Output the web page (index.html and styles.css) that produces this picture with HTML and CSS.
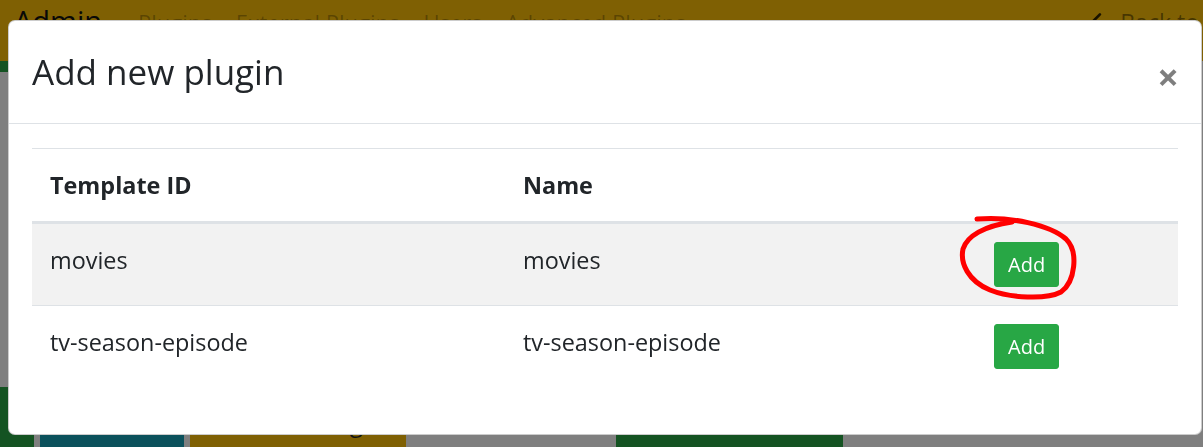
FILE: index.html
```html
<!DOCTYPE html>
<html>
<head>
<meta charset="utf-8">
<link rel="stylesheet" href="styles.css">
</head>
<body>
<div class="page">
  <nav class="navbar">
    <span class="brand">Admin</span>
    <ul class="nav-links">
      <li>Plugins</li>
      <li>External Plugins</li>
      <li>Users</li>
      <li>Advanced Plugins</li>
    </ul>
    <span class="back">
      <svg class="back-icon" viewBox="0 0 24 24" width="26" height="26"><path d="M20 12H5M11 5l-7 7 7 7" fill="none" stroke="currentColor" stroke-width="2.5" stroke-linecap="round" stroke-linejoin="round"/></svg>
      Back to
    </span>
  </nav>
  <div class="content">
    <div class="top-strip"></div>
    <div class="spacer"></div>
    <div class="btn-row">
      <div class="bg-btn green first"></div>
      <div class="bg-btn teal"></div>
      <div class="bg-btn yellow">Running</div>
      <div class="bg-btn blank"></div>
      <div class="bg-btn green wide"></div>
    </div>
  </div>
</div>

<div class="backdrop"></div>

<div class="modal">
  <div class="modal-header">
    <h4 class="modal-title">Add new plugin</h4>
    <span class="close">&times;</span>
  </div>
  <div class="modal-body">
    <table class="table">
      <thead>
        <tr>
          <th class="col-id">Template ID</th>
          <th class="col-name">Name</th>
          <th class="col-action"></th>
        </tr>
      </thead>
      <tbody>
        <tr class="striped">
          <td>movies</td>
          <td>movies</td>
          <td><span class="btn-add">Add</span></td>
        </tr>
        <tr>
          <td>tv-season-episode</td>
          <td>tv-season-episode</td>
          <td><span class="btn-add">Add</span></td>
        </tr>
      </tbody>
    </table>
  </div>
</div>

<svg class="annotation" viewBox="0 0 1203 447" width="1203" height="447">
  <path d="M977,219 C1010,216 1050,225 1066,239 C1079,252 1075,282 1061,292 C1046,300 1010,298 990,290 C968,281 960,263 963,249 C967,236 984,226 1012,222" fill="none" stroke="#ff0000" stroke-width="5" stroke-linecap="round" stroke-linejoin="round"/>
</svg>
</body>
</html>
```

FILE: styles.css
```css
* { box-sizing: border-box; }
html, body {
  margin: 0;
  padding: 0;
  width: 1203px;
  height: 447px;
  overflow: hidden;
}
body {
  font-family: "Open Sans", "Noto Sans", sans-serif;
  color: #212529;
  background: #ffffff;
  font-size: 24px;
}

/* background page */
.page {
  display: flex;
  flex-direction: column;
  height: 447px;
}
.navbar {
  height: 61px;
  background: #ffc107;
  display: flex;
  align-items: flex-start;
  padding: 0 4px 0 14px;
  flex-shrink: 0;
}
.brand {
  font-size: 29px;
  line-height: 40px;
  color: #111;
  margin-top: 1px;
  margin-right: 36px;
}
.nav-links {
  list-style: none;
  margin: 0;
  padding: 0;
  display: flex;
  gap: 24px;
  font-size: 22px;
  line-height: 36px;
  margin-top: 4px;
  color: rgba(0,0,0,.28);
}
.back {
  margin-left: auto;
  display: flex;
  align-items: center;
  gap: 6px;
  font-size: 23px;
  line-height: 36px;
  margin-top: 4px;
  color: rgba(0,0,0,.45);
  white-space: nowrap;
}
.back-icon { color: rgba(0,0,0,.8); }
.content {
  flex: 1;
  display: flex;
  flex-direction: column;
}
.top-strip {
  height: 11px;
  width: 160px;
  background: #28a745;
}
.spacer { height: 315px; }
.btn-row {
  display: flex;
  align-items: flex-start;
}
.bg-btn {
  height: 80px;
  padding-top: 18px;
  font-size: 24px;
  line-height: 36px;
  text-align: center;
  white-space: nowrap;
  overflow: hidden;
}
.green { background: #28a745; color: #fff; }
.teal { background: #17a2b8; color: #fff; margin-left: 6px; width: 144px; }
.yellow { background: #ffc107; color: #212529; margin-left: 6px; width: 216px; padding-left: 37px; }
.blank { width: 210px; }
.first { width: 34px; }
.wide { width: 227px; }

.backdrop {
  position: fixed;
  inset: 0;
  background: rgba(0,0,0,.5);
}

/* modal */
.modal {
  position: absolute;
  left: 8px;
  top: 20px;
  width: 1194px;
  height: 415px;
  background: #fff;
  border: 1px solid rgba(0,0,0,.2);
  border-radius: 7px;
  overflow: hidden;
}
.modal-header {
  display: flex;
  align-items: flex-start;
  justify-content: space-between;
  padding: 24px 24px 24px 23px;
  border-bottom: 1px solid #dee2e6;
}
.modal-title {
  margin: 0;
  font-size: 35px;
  font-weight: 400;
  line-height: 54px;
  color: #212529;
}
.close {
  font-size: 38px;
  font-weight: 700;
  line-height: 36px;
  color: #000;
  opacity: .5;
  margin-top: 13px;
  margin-right: -2px;
}
.modal-body {
  padding: 24px 23px;
}
.table {
  width: 1146px;
  border-collapse: collapse;
  margin: 0;
}
.table th, .table td {
  padding: 18px;
  text-align: left;
  vertical-align: top;
  border-top: 1px solid #dee2e6;
  line-height: 36px;
  font-size: 23.4px;
}
.table thead th {
  vertical-align: bottom;
  border-bottom: 3px solid #dee2e6;
  font-weight: 700;
}
.col-id { width: 473px; }
.col-name { width: 471px; }
.striped td { background: #f2f2f2; }
.btn-add {
  display: inline-block;
  background: #28a745;
  color: #fff;
  border: 1px solid #28a745;
  border-radius: 3px;
  font-size: 20px;
  line-height: 31px;
  padding: 6px 13px;
  vertical-align: top;
}

.annotation {
  position: absolute;
  left: 0;
  top: 0;
  pointer-events: none;
}
```
